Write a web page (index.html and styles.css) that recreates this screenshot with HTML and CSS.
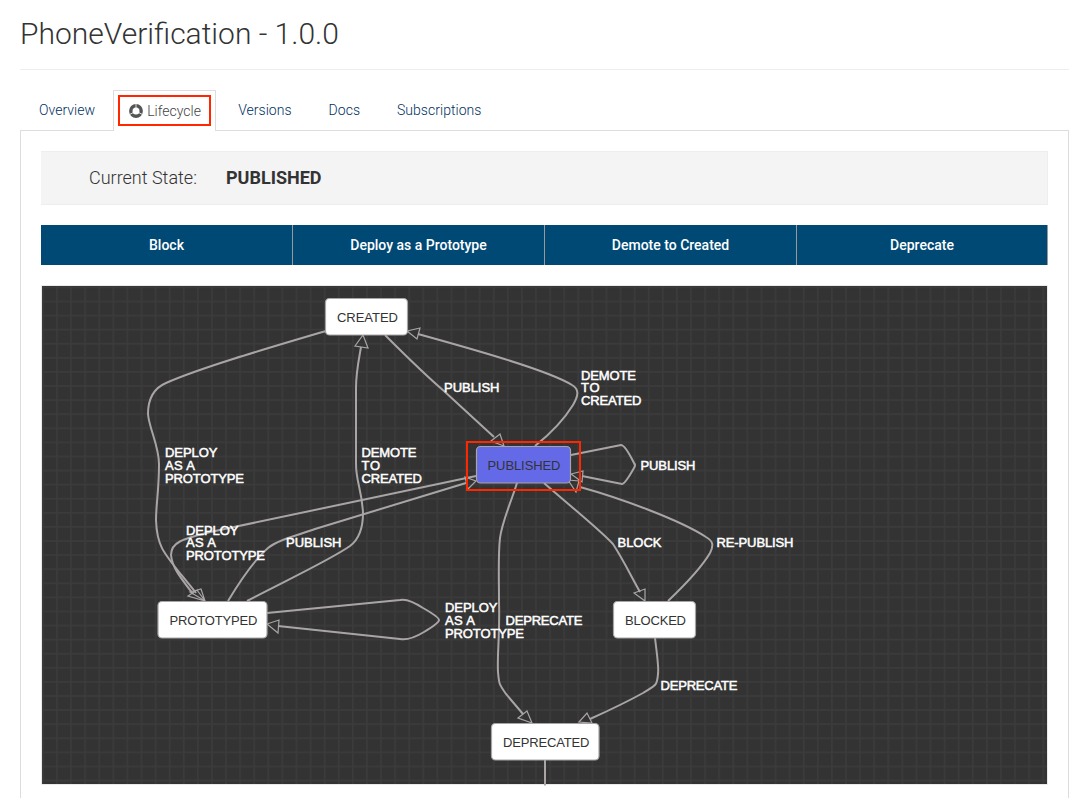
FILE: index.html
```
<!DOCTYPE html>
<html lang="en">
<head>
<meta charset="utf-8">
<title>PhoneVerification - 1.0.0</title>
<link rel="stylesheet" href="styles.css">
</head>
<body>
<main class="page">
  <h1 class="title">PhoneVerification - 1.0.0</h1>
  <nav class="tabs">
    <a class="tab">Overview</a>
    <a class="tab tab-active"><span class="highlight"><svg class="icon" viewBox="0 0 14 14"><circle cx="7" cy="7" r="5.2"/><path d="M7 0v4M0.5 10.5l4-2M13.5 10.5l-4-2"/></svg>Lifecycle</span></a>
    <a class="tab">Versions</a>
    <a class="tab">Docs</a>
    <a class="tab">Subscriptions</a>
  </nav>
  <section class="panel">
    <div class="state"><span class="state-label">Current State:</span><strong class="state-value">PUBLISHED</strong></div>
    <div class="actions">
      <button class="action">Block</button>
      <button class="action">Deploy as a Prototype</button>
      <button class="action">Demote to Created</button>
      <button class="action">Deprecate</button>
    </div>
    <svg class="graph" viewBox="41 285 1007 501">
      <defs>
        <pattern id="grid" x="42" y="286.5" width="14.09" height="14.09" patternUnits="userSpaceOnUse">
          <path class="grid-line" d="M0.8 0V14.09M0 0.8H14.09"/>
        </pattern>
      </defs>
      <rect class="canvas" x="42" y="286" width="1005" height="498"/>
      <rect x="42" y="286" width="1005" height="498" fill="url(#grid)"/>
      <g class="edges">
        <path d="M326 331C265 349 200 368 166 383C152 389 148 401 148 414C149 428 159 446 159 464C159 490 156 505 156 520C157 549 164 553 196 593"/>
        <path d="M247 601C285 581 330 560 350 546C362 537 363 523 363 513C362 490 356 482 356 464V388C356 373 358 364 361 347"/>
        <path d="M385 335C400 350 424 374 444 391L494 437"/>
        <path d="M535 446C550 434 565 418 573 405C579 395 579 389 572 385C548 370 465 347 418 334"/>
        <path d="M571 455L621 445Q625 445 634 463Q636 465 634 468Q625 484 622 484L582 476"/>
        <path d="M476 476L215 531C180 539 171 543 171 555C172 567 180 577 193 594"/>
        <path d="M228 601C240 581 253 561 268 548C278 540 295 536 315 529L466 483"/>
        <path d="M517 483C510 505 502 522 500 538C498 555 499 580 499 601C500 635 497 655 498 672C499 684 499 684 506 694L523 714"/>
        <path d="M544 483C570 506 598 528 613 544C624 561 632 578 640 592"/>
        <path d="M668 601C690 580 703 565 710 553C714 545 713 541 706 537C680 520 620 498 580 487"/>
        <path d="M655 638C657 655 659 667 658 674C657 686 656 685 643 693C625 703 610 710 590 719"/>
        <path d="M267 613L400 600Q408 598 423 608Q439 617 439 620Q439 623 424 632Q409 641 400 639L278 626"/>
        <path d="M545 760V785.500"/>
      </g>
      <path class="arrows" d="M188 596L197 590L205 601ZM190 592L201 589L205 601ZM355 346L363 335L368 348ZM491 441L500 434L504 446ZM407 331L420 328L417 339ZM571 474L583 471L582 482ZM568 480L579 481L576 492ZM465 477L476 481L468 489ZM634 593L645 589L645 601ZM518 718L527 711L532 723ZM579 722L587 713L592 723ZM267 624L279 620L278 633Z"/>
      <g class="nodes">
        <rect x="325.500" y="298.500" width="82" height="36.500" rx="4"/>
        <rect class="node-current" x="476.500" y="446.500" width="94" height="36.500" rx="4"/>
        <rect x="158" y="601.500" width="109" height="36.500" rx="4"/>
        <rect x="613.500" y="601.500" width="82" height="36.500" rx="4"/>
        <rect x="491.500" y="723.500" width="107.500" height="36.500" rx="4"/>
      </g>
      <g class="node-text">
        <text x="337" y="322" textLength="61">CREATED</text>
        <text x="487.500" y="470" textLength="73">PUBLISHED</text>
        <text x="169.500" y="625" textLength="88">PROTOTYPED</text>
        <text x="625" y="625" textLength="61">BLOCKED</text>
        <text x="503" y="747" textLength="86.500">DEPRECATED</text>
      </g>
      <g class="edge-text">
        <text x="444" y="392" textLength="55.500">PUBLISH</text>
        <text x="581" y="380" textLength="55">DEMOTE</text><text x="581" y="392" textLength="18.500">TO</text><text x="581" y="405" textLength="60.500">CREATED</text>
        <text x="165" y="457" textLength="52.500">DEPLOY</text><text x="165" y="470" textLength="30">AS A</text><text x="165" y="483" textLength="79">PROTOTYPE</text>
        <text x="361.500" y="457" textLength="55">DEMOTE</text><text x="361.500" y="470" textLength="18.500">TO</text><text x="361.500" y="483" textLength="60.500">CREATED</text>
        <text x="640.500" y="470" textLength="55">PUBLISH</text>
        <text x="186" y="535" textLength="52.500">DEPLOY</text><text x="186" y="547" textLength="30">AS A</text><text x="186" y="560" textLength="79">PROTOTYPE</text>
        <text x="286" y="547" textLength="55.500">PUBLISH</text>
        <text x="617.500" y="547" textLength="44">BLOCK</text>
        <text x="716.500" y="547" textLength="77">RE-PUBLISH</text>
        <text x="445" y="612" textLength="52.500">DEPLOY</text><text x="445" y="625" textLength="30">AS A</text><text x="445" y="638" textLength="79">PROTOTYPE</text>
        <text x="505.500" y="625" textLength="77">DEPRECATE</text>
        <text x="660.500" y="690" textLength="77">DEPRECATE</text>
      </g>
      <rect class="marker-box" x="467" y="442" width="113" height="48"/>
    </svg>
  </section>
</main>
</body>
</html>
```
FILE: styles.css
```
* { box-sizing: border-box; }
body { margin: 0; background: #fff; color: #333; font-family: Roboto, sans-serif; font-weight: 300; }
.page { display: flex; flex-direction: column; height: 798px; padding: 0 8px 0 20px; overflow: hidden; }
.title { flex: none; margin: 0; height: 70px; padding-top: 13px; border-bottom: 1px solid #eee; font-size: 30px; font-weight: 300; line-height: 41px; }
.tabs { flex: none; display: flex; height: 41px; margin-top: 20px; margin-bottom: -1px; position: relative; z-index: 1; font-size: 14px; line-height: 20px; }
.tab { height: 40px; padding: 10px 19px 0; margin-right: -1px; color: #00305f; font-weight: 300; letter-spacing: 0.03px; white-space: nowrap; }
.tab-active { width: 103px; height: 41px; margin: 0 3px 0 0; padding: 4px 4px 0; border: 1px solid #ddd; border-bottom: 0; background: #fff; color: #444; }
.highlight { display: flex; align-items: center; width: 93px; height: 31px; padding-left: 9px; border: 2px solid #ff2600; }
.icon { width: 14px; height: 14px; margin-right: 4px; flex: none; }
.icon circle { fill: none; stroke: #555; stroke-width: 3.400; }
.icon path { fill: none; stroke: #fff; stroke-width: 0.800; }
.panel { flex: 1; min-height: 0; padding: 20px; border: 1px solid #ddd; border-bottom: 0; }
.state { display: flex; align-items: center; height: 54px; padding-left: 48px; padding-bottom: 1px; border: 1px solid #eee; border-left: 0; background: #f4f4f4; font-size: 18px; }
.state-label { width: 137px; }
.state-value { font-weight: 700; }
.actions { display: grid; grid-template-columns: 252px 252px 252px 1fr; height: 40px; margin-top: 20px; }
.action { padding: 0; border: 0; border-right: 1px solid #999; background: #004975; color: #fff; font: 500 14px/20px Roboto, sans-serif; }
.graph { display: block; width: 1007px; height: 501px; margin-top: 20px; }
.canvas { fill: #333; stroke: #e2e4e2; stroke-width: 1.500; paint-order: stroke; }
.grid-line { fill: none; stroke: #3b3b3b; stroke-width: 1.600; }
.edges { fill: none; stroke: #aaa5a5; stroke-width: 2; }
.arrows { fill: none; stroke: #aaa5a5; stroke-width: 1.200; }
.nodes { fill: #fff; stroke: #aaa5a5; stroke-width: 1.200; }
.node-current { fill: #6469e8; }
.node-text, .edge-text { font-family: "Liberation Sans", sans-serif; font-size: 13px; font-weight: 400; }
.node-text { fill: #333; }
.edge-text { fill: #fff; stroke: #fff; stroke-width: 0.500; }
.marker-box { fill: none; stroke: #ff2600; stroke-width: 2; }
```
